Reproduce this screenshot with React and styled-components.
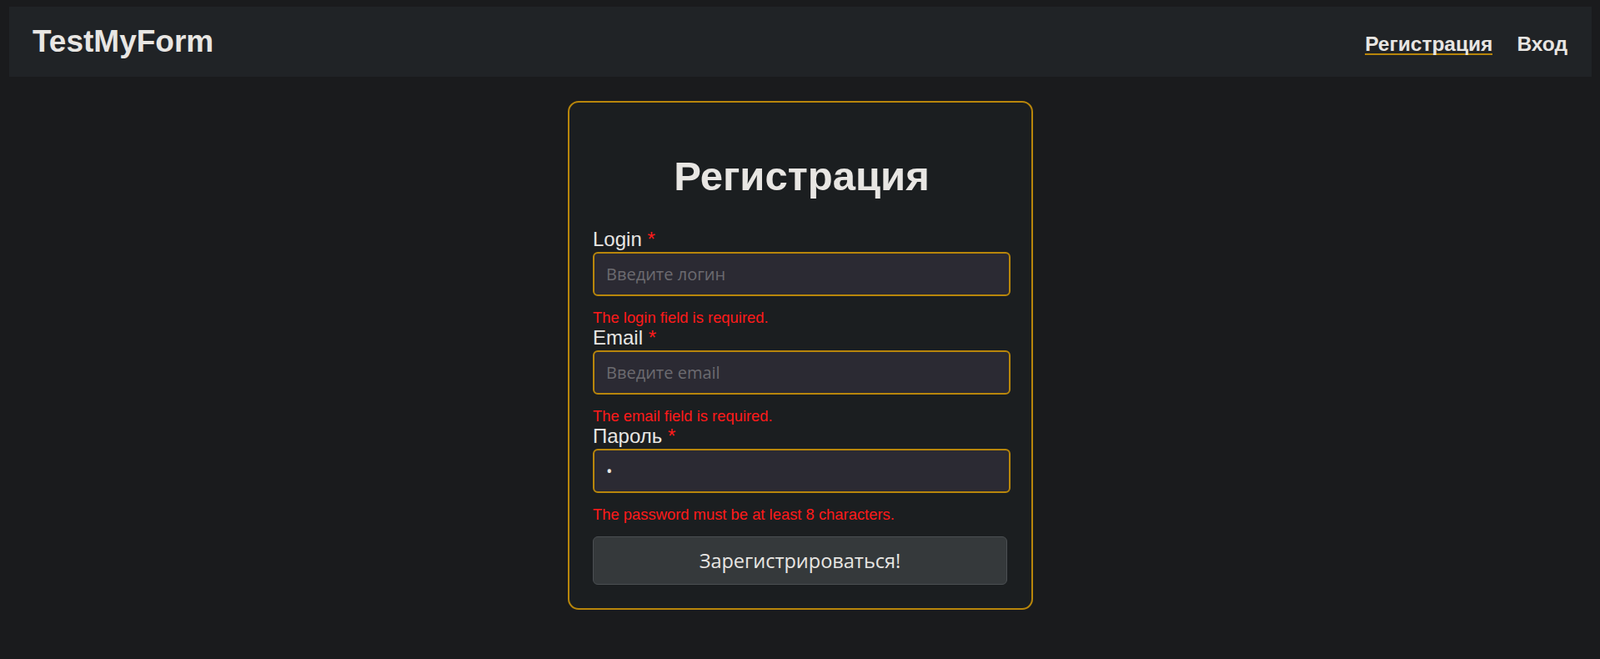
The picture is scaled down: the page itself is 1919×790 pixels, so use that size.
import React from 'react';
import styled, { createGlobalStyle } from 'styled-components';

const colors = {
  page: '#1a1b1d',
  header: '#202326',
  card: '#1b1e20',
  text: '#e8e6e3',
  gold: '#b8860b',
  red: '#ff1a1a',
  input: '#2b2a33',
  placeholder: '#6c6b70',
  button: '#35393b',
  buttonBorder: '#4b4f52',
};

const GlobalStyle = createGlobalStyle`
  html, body {
    margin: 0;
    background: ${colors.page};
    color: ${colors.text};
    font-family: "Liberation Sans", Arial, sans-serif;
  }
  * {
    box-sizing: border-box;
  }
`;

const Page = styled.div`
  padding: 8px 10px 40px 11px;
  min-height: 790px;
`;

const Header = styled.header`
  display: flex;
  align-items: center;
  justify-content: space-between;
  height: 84px;
  padding: 0 29px 0 28px;
  background: ${colors.header};
`;

const Brand = styled.a`
  font-size: 37px;
  font-weight: 700;
  color: ${colors.text};
  text-decoration: none;
`;

const Nav = styled.nav`
  display: flex;
  gap: 29px;
`;

const NavLink = styled.a`
  padding-top: 8px;
  font-size: 24.5px;
  font-weight: 700;
  line-height: 22px;
  color: ${colors.text};
  text-decoration: none;
  border-bottom: 2px solid ${({ $active }) => ($active ? colors.gold : 'transparent')};
`;

const Main = styled.main`
  display: flex;
  justify-content: center;
  padding-top: 29px;
`;

const Card = styled.form`
  width: 558px;
  padding: 0 25px 28px 28px;
  background: ${colors.card};
  border: 2px solid ${colors.gold};
  border-radius: 13px;
`;

const Title = styled.h1`
  margin: 59px 0 33px;
  font-size: 49px;
  font-weight: 700;
  line-height: 58.8px;
  text-align: center;
  color: ${colors.text};
`;

const Label = styled.label`
  display: block;
  font-size: 24px;
  line-height: 26px;
  color: ${colors.text};
`;

const Star = styled.span`
  color: ${colors.red};
`;

const Input = styled.input`
  display: block;
  width: 100%;
  height: 53px;
  margin-top: 2px;
  padding: 0 14px;
  background: ${colors.input};
  border: 2px solid ${colors.gold};
  border-radius: 6px;
  font-family: "Open Sans", "Noto Sans", sans-serif;
  font-size: 20px;
  color: ${colors.text};
  outline: none;

  &::placeholder {
    color: ${colors.placeholder};
  }
`;

const Error = styled.div`
  margin-top: 15px;
  font-size: 18.4px;
  line-height: 22px;
  color: ${colors.red};
`;

const Submit = styled.button`
  display: block;
  width: calc(100% - 4px);
  height: 58px;
  margin-top: 15px;
  background: ${colors.button};
  border: 1px solid ${colors.buttonBorder};
  border-radius: 6px;
  font-family: "Open Sans", "Noto Sans", sans-serif;
  font-size: 23.5px;
  color: ${colors.text};
  cursor: pointer;
`;

const fields = [
  { id: 'login', label: 'Login', type: 'text', placeholder: 'Введите логин', error: 'The login field is required.' },
  { id: 'email', label: 'Email', type: 'email', placeholder: 'Введите email', error: 'The email field is required.' },
  { id: 'password', label: 'Пароль', type: 'password', value: 'a', error: 'The password must be at least 8 characters.' },
];

const App = () => (
  <>
    <GlobalStyle />
    <Page>
      <Header>
        <Brand href="#">TestMyForm</Brand>
        <Nav>
          <NavLink href="#" $active>
            Регистрация
          </NavLink>
          <NavLink href="#">Вход</NavLink>
        </Nav>
      </Header>
      <Main>
        <Card onSubmit={e => e.preventDefault()}>
          <Title>Регистрация</Title>
          {fields.map(({ id, label, type, placeholder, value, error }) => (
            <div key={id}>
              <Label htmlFor={id}>
                {label} <Star>*</Star>
              </Label>
              <Input id={id} type={type} placeholder={placeholder} defaultValue={value} />
              <Error>{error}</Error>
            </div>
          ))}
          <Submit type="submit">Зарегистрироваться!</Submit>
        </Card>
      </Main>
    </Page>
  </>
);

export default App;
